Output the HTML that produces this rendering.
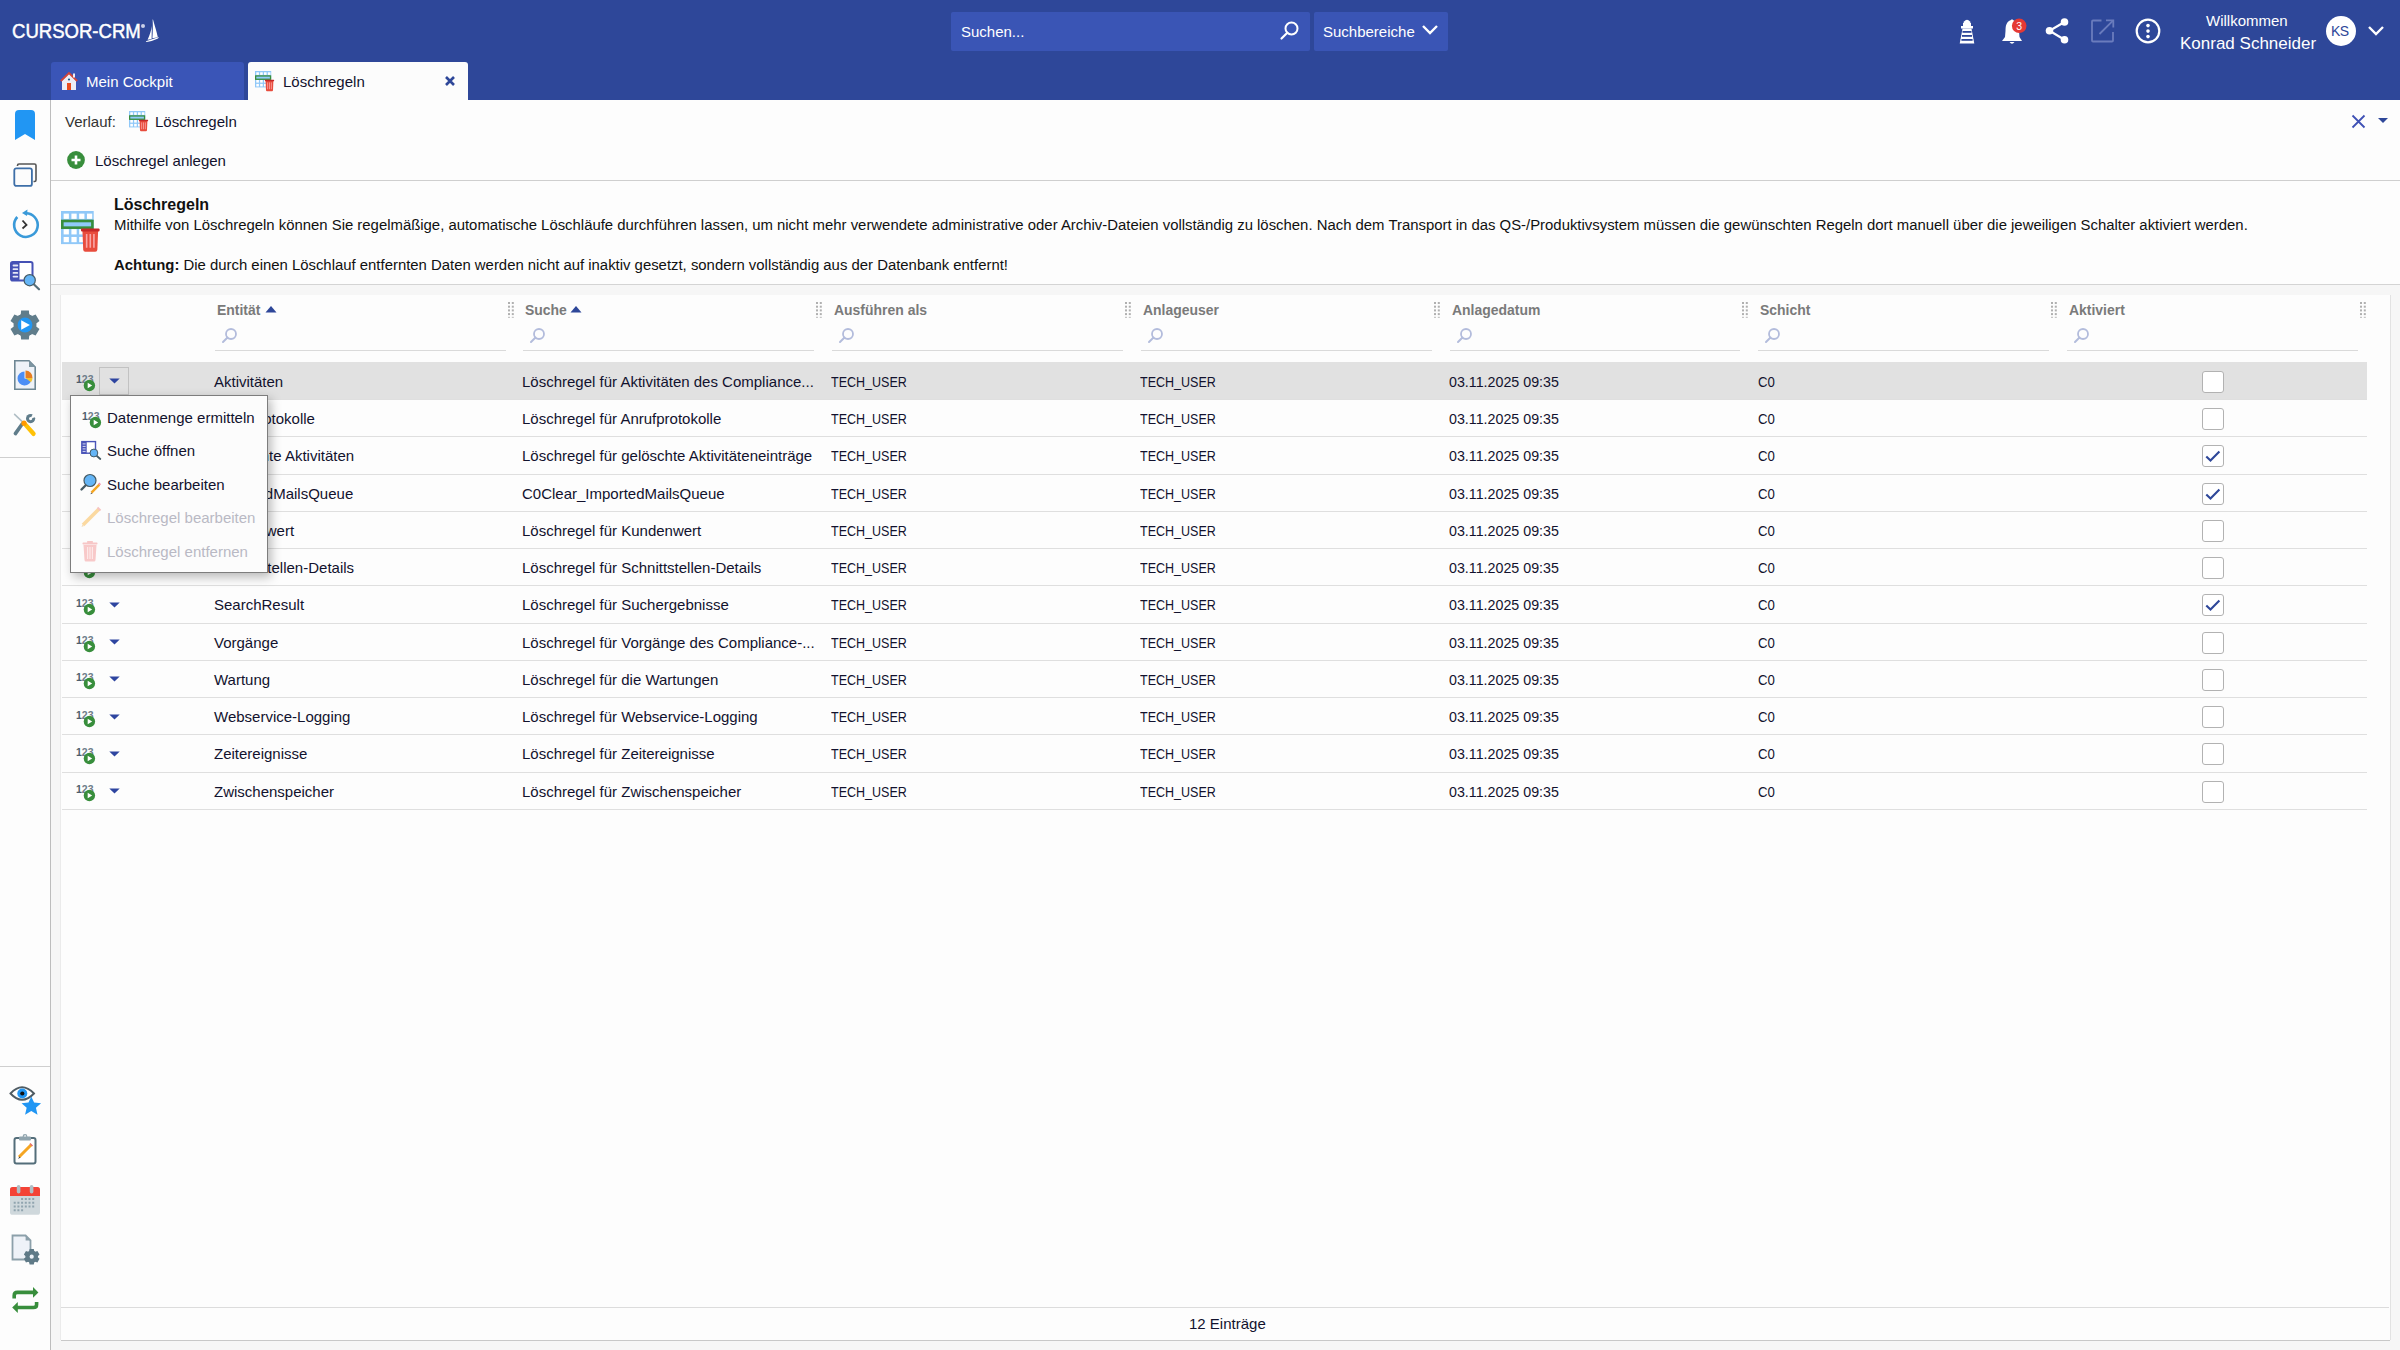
<!DOCTYPE html>
<html><head><meta charset="utf-8"><title>Löschregeln</title><style>
*{box-sizing:border-box;margin:0;padding:0}
html,body{width:2400px;height:1350px;overflow:hidden;background:#fdfdfd;font-family:"Liberation Sans",sans-serif;color:#12122e;font-size:15px}
.a{position:absolute}
.t{position:absolute;white-space:nowrap;line-height:1}
svg{position:absolute;overflow:visible}
</style></head><body>
<div class="a" style="left:0;top:0;width:2400px;height:100px;background:#2e4799"></div>
<div class="t" style="left:12px;top:21px;font-size:20.6px;color:#fff;transform:scaleX(0.9);transform-origin:0 0;-webkit-text-stroke:0.5px #fff">CURSOR-CRM</div>
<div class="a" style="left:141px;top:24px;width:4px;height:4px;border-radius:50%;background:#c9cfe8"></div>
<svg style="left:140px;top:15px" width="25" height="30" viewBox="0 0 25 30"><path d="M12.6 4.6 L13 4.6 C14.5 10 16.5 16 17.8 22.3 L12.4 23.3 C12.9 17 13 10 12.6 4.6 Z" fill="#fff"/><path d="M11.9 11 C11.2 15.5 9.8 20 7.6 24.8 L11.6 24 Z" fill="#fff"/><path d="M5.8 26.3 L19 22 L18 23.6 Q12 26.6 6.6 26.9 Z" fill="#fff"/></svg>
<div class="a" style="left:951px;top:12px;width:359px;height:39px;background:#3a55b5;border-radius:2px"></div>
<div class="t" style="left:961px;top:24px;color:#fff;font-size:15px">Suchen...</div>
<svg style="left:1280px;top:21px" width="20" height="20" viewBox="0 0 20 20"><circle cx="11.5" cy="7.5" r="6" fill="none" stroke="#fff" stroke-width="2"/><path d="M7.3 11.7 L1.5 17.5" stroke="#fff" stroke-width="2.2" stroke-linecap="round"/></svg>
<div class="a" style="left:1314px;top:12px;width:134px;height:39px;background:#3a55b5;border-radius:2px"></div>
<div class="t" style="left:1323px;top:24px;color:#fff;font-size:15px">Suchbereiche</div>
<svg style="left:1421px;top:24px" width="18" height="12" viewBox="0 0 18 12"><path d="M2 2 L9 9 L16 2" fill="none" stroke="#fff" stroke-width="2.4"/></svg>
<svg style="left:1958px;top:18px" width="18" height="27" viewBox="0 0 18 27"><path d="M6 3.5 Q9 0 12 3.5 L12.5 5 L5.5 5 Z" fill="#fff"/><rect x="5" y="5" width="8" height="3" fill="#fff"/><rect x="3" y="8" width="12" height="2.5" fill="#fff"/><path d="M4.5 10.5 L13.5 10.5 L16.3 25.5 L1.7 25.5 Z" fill="#fff"/><rect x="4.5" y="13" width="9" height="1.8" fill="#2e4799"/><rect x="4" y="17" width="10" height="1.8" fill="#2e4799"/><rect x="3.4" y="21" width="11.2" height="1.8" fill="#2e4799"/></svg>
<svg style="left:2000px;top:17px" width="28" height="28" viewBox="0 0 28 28"><path d="M11 3 C6 5 5.5 9 5.5 14 L5 20 L2 24 L22 24 L19.5 20 L19 14 C19 9 17 5 13 3 Q12 1.5 11 3 Z" fill="#fff"/><path d="M9.5 25 Q12 28.5 14.5 25 Z" fill="#fff"/><circle cx="19.2" cy="8.8" r="7.3" fill="#e53935"/><text x="19.2" y="12.6" font-size="10.5" text-anchor="middle" fill="#fff" font-family="Liberation Sans">3</text></svg>
<svg style="left:2044px;top:17px" width="26" height="28" viewBox="0 0 26 28"><path d="M20.5 5 L5.5 13.7 L20.5 22.7" fill="none" stroke="#fff" stroke-width="2.2"/><circle cx="20.5" cy="5" r="3.8" fill="#fff"/><circle cx="5.5" cy="13.7" r="3.8" fill="#fff"/><circle cx="20.5" cy="22.7" r="3.8" fill="#fff"/></svg>
<svg style="left:2091px;top:19px" width="24" height="24" viewBox="0 0 24 24"><path d="M10.5 1.5 L2 1.5 Q1 1.5 1 2.5 L1 21.5 Q1 22.5 2 22.5 L21 22.5 Q22 22.5 22 21.5 L22 13" fill="none" stroke="#6a7cbd" stroke-width="1.8"/><path d="M15 1.3 L22.3 1.3 L22.3 8.5" fill="none" stroke="#6a7cbd" stroke-width="1.8"/><path d="M22 1.6 L8.5 15" stroke="#6a7cbd" stroke-width="1.8"/></svg>
<svg style="left:2134px;top:17px" width="28" height="28" viewBox="0 0 28 28"><circle cx="14" cy="14" r="11.3" fill="none" stroke="#fff" stroke-width="2.2"/><circle cx="14" cy="8.6" r="1.8" fill="#fff"/><circle cx="14" cy="14.1" r="1.8" fill="#fff"/><circle cx="14" cy="19.6" r="1.8" fill="#fff"/></svg>
<div class="t" style="left:2206px;top:13px;color:#fff;font-size:15px">Willkommen</div>
<div class="t" style="left:2180px;top:35px;color:#fff;font-size:17px">Konrad Schneider</div>
<div class="a" style="left:2326px;top:16px;width:30px;height:30px;border-radius:50%;background:#fff"></div>
<div class="t" style="left:2331px;top:24px;color:#2e4799;font-size:14px;letter-spacing:-0.5px">KS</div>
<svg style="left:2367px;top:25px" width="18" height="12" viewBox="0 0 18 12"><path d="M2 2 L9 9 L16 2" fill="none" stroke="#fff" stroke-width="2.4"/></svg>
<div class="a" style="left:51px;top:62px;width:193px;height:38px;background:#3a55b7;border-radius:3px 3px 0 0"></div>
<svg style="left:60px;top:71px" width="18" height="20" viewBox="0 0 18 20"><path d="M2 9.5 L9 2.5 L16 9.5 L16 19 L2 19 Z" fill="#eceef6"/><path d="M0.8 10 L9 2 L17.2 10" fill="none" stroke="#d0453a" stroke-width="1.8"/><rect x="13" y="2.5" width="2" height="4" fill="#eceef6"/><rect x="7" y="12" width="4" height="7" fill="#e84c1e"/><circle cx="9" cy="8.5" r="1.1" fill="#1e5a8a"/></svg>
<div class="t" style="left:86px;top:74px;color:#fff;font-size:15px">Mein Cockpit</div>
<div class="a" style="left:248px;top:62px;width:220px;height:38px;background:#fcfcfc;border-radius:3px 3px 0 0"></div>
<svg style="left:255px;top:71px" width="20.0" height="21.0" viewBox="0 0 20 21"><rect x="0" y="0" width="16.2" height="16.4" fill="#90c8f8"/><rect x="1.30" y="1.30" width="2.6" height="2.6" fill="#fff"/><rect x="1.30" y="9.00" width="2.6" height="2.6" fill="#fff"/><rect x="1.30" y="12.85" width="2.6" height="2.6" fill="#fff"/><rect x="5.15" y="1.30" width="2.6" height="2.6" fill="#fff"/><rect x="5.15" y="9.00" width="2.6" height="2.6" fill="#fff"/><rect x="5.15" y="12.85" width="2.6" height="2.6" fill="#fff"/><rect x="9.00" y="1.30" width="2.6" height="2.6" fill="#fff"/><rect x="9.00" y="9.00" width="2.6" height="2.6" fill="#fff"/><rect x="9.00" y="12.85" width="2.6" height="2.6" fill="#fff"/><rect x="12.85" y="1.30" width="2.6" height="2.6" fill="#fff"/><rect x="12.85" y="9.00" width="2.6" height="2.6" fill="#fff"/><rect x="12.85" y="12.85" width="2.6" height="2.6" fill="#fff"/><rect x="0" y="4.3" width="16.2" height="4.6" fill="#388e3c"/><rect x="1.3" y="5.6" width="13.6" height="2" fill="#90caf9"/><g transform="translate(0,-0.6)"><path d="M10.6 10 L18.4 10 L18 19.8 Q17.9 20.8 17 20.8 L12 20.8 Q11.1 20.8 11 19.8 Z" fill="#e84c3d"/><rect x="9.9" y="9.3" width="9.2" height="1.5" rx="0.5" fill="#c62828"/><rect x="12.3" y="12" width="0.8" height="6.8" fill="#f9a6a6"/><rect x="14.1" y="12" width="0.8" height="6.8" fill="#f9a6a6"/><rect x="15.9" y="12" width="0.8" height="6.8" fill="#f9a6a6"/></g></svg>
<div class="t" style="left:283px;top:74px;color:#12122e;font-size:15px">Löschregeln</div>
<svg style="left:444px;top:75px" width="12" height="12" viewBox="0 0 12 12"><path d="M2 2 L10 10 M10 2 L2 10" stroke="#2e4799" stroke-width="2.6"/></svg>
<div class="a" style="left:50px;top:100px;width:1px;height:1250px;background:#bdbdbd"></div>
<div class="a" style="left:0;top:457px;width:50px;height:1px;background:#cfcfcf"></div>
<div class="a" style="left:0;top:1066px;width:50px;height:1px;background:#cfcfcf"></div>
<svg style="left:15px;top:110px" width="20" height="30" viewBox="0 0 20 30"><path d="M0 4 Q0 0 4 0 L16 0 Q20 0 20 4 L20 30 L10 24 L0 30 Z" fill="#2196f3"/></svg>
<svg style="left:13px;top:163px" width="25" height="25" viewBox="0 0 25 25"><path d="M4.5 3 L4.5 2.5 Q4.5 1 6 1 L21.5 1 Q23 1 23 2.5 L23 17 Q23 18.5 21.5 18.5 L20.5 18.5" fill="none" stroke="#555" stroke-width="1.6"/><rect x="1.3" y="5.3" width="17.6" height="17.6" rx="2" fill="#fcfcfc" stroke="#3e6fa8" stroke-width="1.8"/></svg>
<svg style="left:11px;top:210px" width="28" height="30" viewBox="0 0 28 30"><path d="M6.3 7 A11.8 11.8 0 1 0 14 3.3" fill="none" stroke="#3a9ad9" stroke-width="2.6"/><path d="M11 3 L16.5 -0.5 L16 6 Z" fill="#3a9ad9"/><path d="M11.5 10.5 L15.5 15 L11.5 18.5" fill="none" stroke="#333" stroke-width="1.8"/></svg>
<svg style="left:10px;top:261px" width="31" height="30" viewBox="0 0 31 30"><rect x="1" y="1" width="21.5" height="18.5" rx="1.8" fill="#fff" stroke="#4551b5" stroke-width="2"/><rect x="1" y="1" width="8.5" height="18.5" rx="1.5" fill="#4551b5"/><rect x="2.6" y="3.6" width="5.6" height="1.8" rx="0.9" fill="#e6e8f6"/><rect x="2.6" y="7.3" width="5.6" height="1.8" rx="0.9" fill="#e6e8f6"/><rect x="2.6" y="11" width="5.6" height="1.8" rx="0.9" fill="#e6e8f6"/><rect x="2.6" y="14.7" width="5.6" height="1.8" rx="0.9" fill="#e6e8f6"/><path d="M24 23.5 L29 28.3" stroke="#546e7a" stroke-width="2.2" stroke-linecap="round"/><circle cx="19.7" cy="19.2" r="5.6" fill="#64b5f6" stroke="#455a64" stroke-width="1.2"/></svg>
<svg style="left:10px;top:310px" width="30" height="30" viewBox="0 0 30 30"><path d="M10.77 4.52 L11.12 0.51 L18.88 0.51 L19.23 4.52 L21.96 6.10 L25.61 4.39 L29.49 11.12 L26.19 13.43 L26.19 16.57 L29.49 18.88 L25.61 25.61 L21.96 23.90 L19.23 25.48 L18.88 29.49 L11.12 29.49 L10.77 25.48 L8.04 23.90 L4.39 25.61 L0.51 18.88 L3.81 16.57 L3.81 13.43 L0.51 11.12 L4.39 4.39 L8.04 6.10 Z" fill="#607d8b"/><circle cx="15" cy="15" r="11.3" fill="#607d8b"/><circle cx="15" cy="15" r="7.4" fill="#2196f3"/><path d="M11.2 10.2 L19.9 15 L11.2 19.8 Z" fill="#fff"/></svg>
<svg style="left:14px;top:360px" width="22" height="30" viewBox="0 0 22 30"><path d="M0.8 0.8 L15 0.8 L21.2 7 L21.2 29.2 L0.8 29.2 Z" fill="#eef2f8" stroke="#6e8794" stroke-width="1.6"/><path d="M15 0.8 L15 7 L21.2 7 Z" fill="#7e96a2"/><g transform="translate(-1,-0.5)"><path d="M11.5 12 A7 7 0 1 0 18.5 19.5 L11.5 19 Z" fill="#4c8ef5"/><path d="M12.5 11 L12.5 18.5 L19.5 18.5 A7 7 0 0 0 12.5 11 Z" fill="#e67e22"/><path d="M12.5 18.5 L19.5 18.5 A7 7 0 0 1 18 22.8 Z" fill="#f4c430"/></g></svg>
<svg style="left:12px;top:412px" width="26" height="26" viewBox="0 0 26 26"><path d="M2.6 2.4 L10.5 9.8" stroke="#b0bec5" stroke-width="1.6" stroke-linecap="round"/><path d="M10 12.2 L3.4 21.6" stroke="#607d8b" stroke-width="3.6" stroke-linecap="round"/><circle cx="18.6" cy="6.6" r="4.6" fill="#607d8b"/><path d="M18.6 6.6 L21.5 0.5 L26 4.5 Z" fill="#fdfdfd"/><circle cx="18.6" cy="6.6" r="1.6" fill="#fdfdfd"/><path d="M13.2 12.4 L21.5 21.8" stroke="#ffc107" stroke-width="4.4" stroke-linecap="round"/><circle cx="12" cy="11.2" r="2.6" fill="#ff9800"/></svg>
<svg style="left:9px;top:1084px" width="33" height="32" viewBox="0 0 33 32"><path d="M1.5 9.5 Q13 -3 25 9.5 Q13 22 1.5 9.5 Z" fill="#fff" stroke="#4f5b62" stroke-width="1.9"/><circle cx="13.3" cy="9.5" r="5" fill="#2196f3"/><circle cx="13.3" cy="9.5" r="2.1" fill="#111"/><path transform="translate(22.3,21.6) scale(1.22) translate(-21.5,-21.5)" d="M21.5 14 L23.8 19 L29.5 19.5 L25.3 23.2 L26.6 29 L21.5 26 L16.4 29 L17.7 23.2 L13.5 19.5 L19.2 19 Z" fill="#2196f3"/></svg>
<svg style="left:13px;top:1134px" width="25" height="31" viewBox="0 0 25 31"><rect x="1.5" y="4" width="21" height="25.5" rx="2" fill="#fff" stroke="#546e7a" stroke-width="2"/><rect x="6" y="2.5" width="12" height="4" rx="1" fill="#90a4ae"/><circle cx="12" cy="2.5" r="1.8" fill="none" stroke="#90a4ae" stroke-width="1.2"/><path d="M18.5 10.5 L6 23" stroke="#f5a623" stroke-width="3"/><path d="M6.5 22.5 L5 25 L7.5 23.5 Z" fill="#444"/><path d="M17 9.5 L19.5 12" stroke="#e57373" stroke-width="1.5"/></svg>
<svg style="left:10px;top:1185px" width="30" height="31" viewBox="0 0 30 31"><rect x="0" y="2" width="30" height="27.8" rx="2.6" fill="#cfd8dc"/><path d="M0 4.6 Q0 2 2.6 2 L27.4 2 Q30 2 30 4.6 L30 11 L0 11 Z" fill="#f44336"/><rect x="6.8" y="0" width="3.6" height="8.5" rx="1.8" fill="#b0bec5"/><rect x="19.8" y="0" width="3.6" height="8.5" rx="1.8" fill="#b0bec5"/><rect x="11.10" y="13.00" width="2" height="2" fill="#90a4ae"/><rect x="14.80" y="13.00" width="2" height="2" fill="#90a4ae"/><rect x="18.50" y="13.00" width="2" height="2" fill="#90a4ae"/><rect x="22.20" y="13.00" width="2" height="2" fill="#90a4ae"/><rect x="3.70" y="16.75" width="2" height="2" fill="#90a4ae"/><rect x="7.40" y="16.75" width="2" height="2" fill="#90a4ae"/><rect x="11.10" y="16.75" width="2" height="2" fill="#90a4ae"/><rect x="14.80" y="16.75" width="2" height="2" fill="#90a4ae"/><rect x="18.50" y="16.75" width="2" height="2" fill="#90a4ae"/><rect x="22.20" y="16.75" width="2" height="2" fill="#90a4ae"/><rect x="3.70" y="20.50" width="2" height="2" fill="#90a4ae"/><rect x="7.40" y="20.50" width="2" height="2" fill="#90a4ae"/><rect x="11.10" y="20.50" width="2" height="2" fill="#90a4ae"/><rect x="14.80" y="20.50" width="2" height="2" fill="#90a4ae"/><rect x="18.50" y="20.50" width="2" height="2" fill="#90a4ae"/><rect x="22.20" y="20.50" width="2" height="2" fill="#90a4ae"/><rect x="3.70" y="24.25" width="2" height="2" fill="#90a4ae"/><rect x="7.40" y="24.25" width="2" height="2" fill="#90a4ae"/><rect x="11.10" y="24.25" width="2" height="2" fill="#90a4ae"/></svg>
<svg style="left:11px;top:1234px" width="31" height="32" viewBox="0 0 31 32"><path d="M1.5 1.5 L14.6 1.5 L19.5 6.4 L19.5 25.5 L1.5 25.5 Z" fill="#eef2f8" stroke="#8ca0aa" stroke-width="1.8"/><path d="M14.6 1.5 L14.6 6.4 L19.5 6.4 Z" fill="#8ca0aa"/><path d="M18.12 17.17 L18.60 14.88 L22.80 14.88 L23.28 17.17 L24.20 17.70 L26.43 16.97 L28.52 20.60 L26.78 22.17 L26.78 23.23 L28.52 24.80 L26.43 28.43 L24.20 27.70 L23.28 28.23 L22.80 30.52 L18.60 30.52 L18.12 28.23 L17.20 27.70 L14.97 28.43 L12.88 24.80 L14.62 23.23 L14.62 22.17 L12.88 20.60 L14.97 16.97 L17.20 17.70 Z" fill="#5f7a87"/><circle cx="20.7" cy="22.7" r="6.1" fill="#5f7a87"/><circle cx="20.7" cy="22.7" r="2.1" fill="#eef2f8"/></svg>
<svg style="left:11px;top:1286px" width="29" height="28" viewBox="0 0 29 28"><path d="M3.2 12.5 L3.2 9.6 Q3.2 6.4 6.4 6.4 L23 6.4" fill="none" stroke="#388e3c" stroke-width="3.6"/><path d="M22 1 L27.4 6.4 L22 11.8 Z" fill="#388e3c"/><path d="M25.6 16 L25.6 18.4 Q25.6 21.5 22.4 21.5 L6 21.5" fill="none" stroke="#388e3c" stroke-width="3.6"/><path d="M6.8 16 L1.2 21.5 L6.8 27 Z" fill="#388e3c"/></svg>
<div class="t" style="left:65px;top:114px;font-size:15px;color:#333">Verlauf:</div>
<svg style="left:129px;top:111px" width="20.0" height="21.0" viewBox="0 0 20 21"><rect x="0" y="0" width="16.2" height="16.4" fill="#90c8f8"/><rect x="1.30" y="1.30" width="2.6" height="2.6" fill="#fff"/><rect x="1.30" y="9.00" width="2.6" height="2.6" fill="#fff"/><rect x="1.30" y="12.85" width="2.6" height="2.6" fill="#fff"/><rect x="5.15" y="1.30" width="2.6" height="2.6" fill="#fff"/><rect x="5.15" y="9.00" width="2.6" height="2.6" fill="#fff"/><rect x="5.15" y="12.85" width="2.6" height="2.6" fill="#fff"/><rect x="9.00" y="1.30" width="2.6" height="2.6" fill="#fff"/><rect x="9.00" y="9.00" width="2.6" height="2.6" fill="#fff"/><rect x="9.00" y="12.85" width="2.6" height="2.6" fill="#fff"/><rect x="12.85" y="1.30" width="2.6" height="2.6" fill="#fff"/><rect x="12.85" y="9.00" width="2.6" height="2.6" fill="#fff"/><rect x="12.85" y="12.85" width="2.6" height="2.6" fill="#fff"/><rect x="0" y="4.3" width="16.2" height="4.6" fill="#388e3c"/><rect x="1.3" y="5.6" width="13.6" height="2" fill="#90caf9"/><g transform="translate(0,-0.6)"><path d="M10.6 10 L18.4 10 L18 19.8 Q17.9 20.8 17 20.8 L12 20.8 Q11.1 20.8 11 19.8 Z" fill="#e84c3d"/><rect x="9.9" y="9.3" width="9.2" height="1.5" rx="0.5" fill="#c62828"/><rect x="12.3" y="12" width="0.8" height="6.8" fill="#f9a6a6"/><rect x="14.1" y="12" width="0.8" height="6.8" fill="#f9a6a6"/><rect x="15.9" y="12" width="0.8" height="6.8" fill="#f9a6a6"/></g></svg>
<div class="t" style="left:155px;top:114px;font-size:15px">Löschregeln</div>
<svg style="left:2351px;top:114px" width="15" height="15" viewBox="0 0 15 15"><path d="M1.5 1.5 L13.5 13.5 M13.5 1.5 L1.5 13.5" stroke="#3f51b5" stroke-width="1.8"/></svg>
<svg style="left:2377px;top:116.5px" width="12" height="8" viewBox="0 0 12 8"><path d="M1 1 L11 1 L6 6 Z" fill="#2e4799"/></svg>
<svg style="left:67px;top:151px" width="18" height="18" viewBox="0 0 18 18"><circle cx="9" cy="9" r="8.9" fill="#388e3c"/><path d="M9 4.5 L9 13.5 M4.5 9 L13.5 9" stroke="#fff" stroke-width="2.6"/></svg>
<div class="t" style="left:95px;top:153px;font-size:15px">Löschregel anlegen</div>
<div class="a" style="left:51px;top:180px;width:2349px;height:1px;background:#cfcfcf"></div>
<svg style="left:61px;top:211px" width="40.4" height="42.42" viewBox="0 0 20 21"><rect x="0" y="0" width="16.2" height="16.4" fill="#90c8f8"/><rect x="1.30" y="1.30" width="2.6" height="2.6" fill="#fff"/><rect x="1.30" y="9.00" width="2.6" height="2.6" fill="#fff"/><rect x="1.30" y="12.85" width="2.6" height="2.6" fill="#fff"/><rect x="5.15" y="1.30" width="2.6" height="2.6" fill="#fff"/><rect x="5.15" y="9.00" width="2.6" height="2.6" fill="#fff"/><rect x="5.15" y="12.85" width="2.6" height="2.6" fill="#fff"/><rect x="9.00" y="1.30" width="2.6" height="2.6" fill="#fff"/><rect x="9.00" y="9.00" width="2.6" height="2.6" fill="#fff"/><rect x="9.00" y="12.85" width="2.6" height="2.6" fill="#fff"/><rect x="12.85" y="1.30" width="2.6" height="2.6" fill="#fff"/><rect x="12.85" y="9.00" width="2.6" height="2.6" fill="#fff"/><rect x="12.85" y="12.85" width="2.6" height="2.6" fill="#fff"/><rect x="0" y="4.3" width="16.2" height="4.6" fill="#388e3c"/><rect x="1.3" y="5.6" width="13.6" height="2" fill="#90caf9"/><g transform="translate(0,-0.6)"><path d="M10.6 10 L18.4 10 L18 19.8 Q17.9 20.8 17 20.8 L12 20.8 Q11.1 20.8 11 19.8 Z" fill="#e84c3d"/><rect x="9.9" y="9.3" width="9.2" height="1.5" rx="0.5" fill="#c62828"/><rect x="12.3" y="12" width="0.8" height="6.8" fill="#f9a6a6"/><rect x="14.1" y="12" width="0.8" height="6.8" fill="#f9a6a6"/><rect x="15.9" y="12" width="0.8" height="6.8" fill="#f9a6a6"/></g></svg>
<div class="t" style="left:114px;top:197px;font-size:16px;font-weight:700;color:#111">Löschregeln</div>
<div class="t" style="left:114px;top:218px;font-size:14.9px;color:#111">Mithilfe von Löschregeln können Sie regelmäßige, automatische Löschläufe durchführen lassen, um nicht mehr verwendete administrative oder Archiv-Dateien vollständig zu löschen. Nach dem Transport in das QS-/Produktivsystem müssen die gewünschten Regeln dort manuell über die jeweiligen Schalter aktiviert werden.</div>
<div class="t" style="left:114px;top:258px;font-size:14.9px;color:#111"><b>Achtung:</b> Die durch einen Löschlauf entfernten Daten werden nicht auf inaktiv gesetzt, sondern vollständig aus der Datenbank entfernt!</div>
<div class="a" style="left:51px;top:284px;width:2349px;height:1px;background:#d4d4d4"></div>
<div class="a" style="left:51px;top:285px;width:2349px;height:1065px;background:#f6f6f6"></div>
<div class="a" style="left:61px;top:295px;width:2329px;height:1045px;background:#fdfdfd;box-shadow:0 1px 0 #c8c8c8, 1px 0 0 #e2e2e2, -1px 0 0 #ebebeb"></div>
<div class="t" style="left:217px;top:302px;font-size:15px;font-weight:700;color:#7a7a7a;transform:scaleX(0.93);transform-origin:0 0">Entität</div>
<div class="a" style="left:215px;top:350px;width:291px;height:1px;background:#dadada"></div>
<svg style="left:221px;top:327px" width="17" height="17" viewBox="0 0 17 17"><circle cx="10" cy="7" r="5" fill="none" stroke="#b3bcdc" stroke-width="1.8"/><path d="M6.5 10.5 L2 15" stroke="#b3bcdc" stroke-width="2" stroke-linecap="round"/></svg>
<div class="t" style="left:525px;top:302px;font-size:15px;font-weight:700;color:#7a7a7a;transform:scaleX(0.93);transform-origin:0 0">Suche</div>
<div class="a" style="left:523px;top:350px;width:291px;height:1px;background:#dadada"></div>
<svg style="left:529px;top:327px" width="17" height="17" viewBox="0 0 17 17"><circle cx="10" cy="7" r="5" fill="none" stroke="#b3bcdc" stroke-width="1.8"/><path d="M6.5 10.5 L2 15" stroke="#b3bcdc" stroke-width="2" stroke-linecap="round"/></svg>
<div class="t" style="left:834px;top:302px;font-size:15px;font-weight:700;color:#7a7a7a;transform:scaleX(0.93);transform-origin:0 0">Ausführen als</div>
<div class="a" style="left:832px;top:350px;width:291px;height:1px;background:#dadada"></div>
<svg style="left:838px;top:327px" width="17" height="17" viewBox="0 0 17 17"><circle cx="10" cy="7" r="5" fill="none" stroke="#b3bcdc" stroke-width="1.8"/><path d="M6.5 10.5 L2 15" stroke="#b3bcdc" stroke-width="2" stroke-linecap="round"/></svg>
<div class="t" style="left:1143px;top:302px;font-size:15px;font-weight:700;color:#7a7a7a;transform:scaleX(0.93);transform-origin:0 0">Anlageuser</div>
<div class="a" style="left:1141px;top:350px;width:291px;height:1px;background:#dadada"></div>
<svg style="left:1147px;top:327px" width="17" height="17" viewBox="0 0 17 17"><circle cx="10" cy="7" r="5" fill="none" stroke="#b3bcdc" stroke-width="1.8"/><path d="M6.5 10.5 L2 15" stroke="#b3bcdc" stroke-width="2" stroke-linecap="round"/></svg>
<div class="t" style="left:1452px;top:302px;font-size:15px;font-weight:700;color:#7a7a7a;transform:scaleX(0.93);transform-origin:0 0">Anlagedatum</div>
<div class="a" style="left:1450px;top:350px;width:290px;height:1px;background:#dadada"></div>
<svg style="left:1456px;top:327px" width="17" height="17" viewBox="0 0 17 17"><circle cx="10" cy="7" r="5" fill="none" stroke="#b3bcdc" stroke-width="1.8"/><path d="M6.5 10.5 L2 15" stroke="#b3bcdc" stroke-width="2" stroke-linecap="round"/></svg>
<div class="t" style="left:1760px;top:302px;font-size:15px;font-weight:700;color:#7a7a7a;transform:scaleX(0.93);transform-origin:0 0">Schicht</div>
<div class="a" style="left:1758px;top:350px;width:291px;height:1px;background:#dadada"></div>
<svg style="left:1764px;top:327px" width="17" height="17" viewBox="0 0 17 17"><circle cx="10" cy="7" r="5" fill="none" stroke="#b3bcdc" stroke-width="1.8"/><path d="M6.5 10.5 L2 15" stroke="#b3bcdc" stroke-width="2" stroke-linecap="round"/></svg>
<div class="t" style="left:2069px;top:302px;font-size:15px;font-weight:700;color:#7a7a7a;transform:scaleX(0.93);transform-origin:0 0">Aktiviert</div>
<div class="a" style="left:2067px;top:350px;width:291px;height:1px;background:#dadada"></div>
<svg style="left:2073px;top:327px" width="17" height="17" viewBox="0 0 17 17"><circle cx="10" cy="7" r="5" fill="none" stroke="#b3bcdc" stroke-width="1.8"/><path d="M6.5 10.5 L2 15" stroke="#b3bcdc" stroke-width="2" stroke-linecap="round"/></svg>
<svg style="left:508px;top:302px" width="6" height="17" viewBox="0 0 6 17"><rect x="0" y="0" width="2" height="2" fill="#b0b0b0"/><rect x="0" y="3.7" width="2" height="2" fill="#b0b0b0"/><rect x="0" y="7.4" width="2" height="2" fill="#b0b0b0"/><rect x="0" y="11.1" width="2" height="2" fill="#b0b0b0"/><rect x="3.8" y="0" width="2" height="2" fill="#b0b0b0"/><rect x="3.8" y="3.7" width="2" height="2" fill="#b0b0b0"/><rect x="3.8" y="7.4" width="2" height="2" fill="#b0b0b0"/><rect x="3.8" y="11.1" width="2" height="2" fill="#b0b0b0"/><rect x="0" y="14.8" width="2" height="1" fill="#b8b8b8"/><rect x="3.8" y="14.8" width="2" height="1" fill="#b8b8b8"/></svg>
<svg style="left:816px;top:302px" width="6" height="17" viewBox="0 0 6 17"><rect x="0" y="0" width="2" height="2" fill="#b0b0b0"/><rect x="0" y="3.7" width="2" height="2" fill="#b0b0b0"/><rect x="0" y="7.4" width="2" height="2" fill="#b0b0b0"/><rect x="0" y="11.1" width="2" height="2" fill="#b0b0b0"/><rect x="3.8" y="0" width="2" height="2" fill="#b0b0b0"/><rect x="3.8" y="3.7" width="2" height="2" fill="#b0b0b0"/><rect x="3.8" y="7.4" width="2" height="2" fill="#b0b0b0"/><rect x="3.8" y="11.1" width="2" height="2" fill="#b0b0b0"/><rect x="0" y="14.8" width="2" height="1" fill="#b8b8b8"/><rect x="3.8" y="14.8" width="2" height="1" fill="#b8b8b8"/></svg>
<svg style="left:1125px;top:302px" width="6" height="17" viewBox="0 0 6 17"><rect x="0" y="0" width="2" height="2" fill="#b0b0b0"/><rect x="0" y="3.7" width="2" height="2" fill="#b0b0b0"/><rect x="0" y="7.4" width="2" height="2" fill="#b0b0b0"/><rect x="0" y="11.1" width="2" height="2" fill="#b0b0b0"/><rect x="3.8" y="0" width="2" height="2" fill="#b0b0b0"/><rect x="3.8" y="3.7" width="2" height="2" fill="#b0b0b0"/><rect x="3.8" y="7.4" width="2" height="2" fill="#b0b0b0"/><rect x="3.8" y="11.1" width="2" height="2" fill="#b0b0b0"/><rect x="0" y="14.8" width="2" height="1" fill="#b8b8b8"/><rect x="3.8" y="14.8" width="2" height="1" fill="#b8b8b8"/></svg>
<svg style="left:1434px;top:302px" width="6" height="17" viewBox="0 0 6 17"><rect x="0" y="0" width="2" height="2" fill="#b0b0b0"/><rect x="0" y="3.7" width="2" height="2" fill="#b0b0b0"/><rect x="0" y="7.4" width="2" height="2" fill="#b0b0b0"/><rect x="0" y="11.1" width="2" height="2" fill="#b0b0b0"/><rect x="3.8" y="0" width="2" height="2" fill="#b0b0b0"/><rect x="3.8" y="3.7" width="2" height="2" fill="#b0b0b0"/><rect x="3.8" y="7.4" width="2" height="2" fill="#b0b0b0"/><rect x="3.8" y="11.1" width="2" height="2" fill="#b0b0b0"/><rect x="0" y="14.8" width="2" height="1" fill="#b8b8b8"/><rect x="3.8" y="14.8" width="2" height="1" fill="#b8b8b8"/></svg>
<svg style="left:1742px;top:302px" width="6" height="17" viewBox="0 0 6 17"><rect x="0" y="0" width="2" height="2" fill="#b0b0b0"/><rect x="0" y="3.7" width="2" height="2" fill="#b0b0b0"/><rect x="0" y="7.4" width="2" height="2" fill="#b0b0b0"/><rect x="0" y="11.1" width="2" height="2" fill="#b0b0b0"/><rect x="3.8" y="0" width="2" height="2" fill="#b0b0b0"/><rect x="3.8" y="3.7" width="2" height="2" fill="#b0b0b0"/><rect x="3.8" y="7.4" width="2" height="2" fill="#b0b0b0"/><rect x="3.8" y="11.1" width="2" height="2" fill="#b0b0b0"/><rect x="0" y="14.8" width="2" height="1" fill="#b8b8b8"/><rect x="3.8" y="14.8" width="2" height="1" fill="#b8b8b8"/></svg>
<svg style="left:2051px;top:302px" width="6" height="17" viewBox="0 0 6 17"><rect x="0" y="0" width="2" height="2" fill="#b0b0b0"/><rect x="0" y="3.7" width="2" height="2" fill="#b0b0b0"/><rect x="0" y="7.4" width="2" height="2" fill="#b0b0b0"/><rect x="0" y="11.1" width="2" height="2" fill="#b0b0b0"/><rect x="3.8" y="0" width="2" height="2" fill="#b0b0b0"/><rect x="3.8" y="3.7" width="2" height="2" fill="#b0b0b0"/><rect x="3.8" y="7.4" width="2" height="2" fill="#b0b0b0"/><rect x="3.8" y="11.1" width="2" height="2" fill="#b0b0b0"/><rect x="0" y="14.8" width="2" height="1" fill="#b8b8b8"/><rect x="3.8" y="14.8" width="2" height="1" fill="#b8b8b8"/></svg>
<svg style="left:2360px;top:302px" width="6" height="17" viewBox="0 0 6 17"><rect x="0" y="0" width="2" height="2" fill="#b0b0b0"/><rect x="0" y="3.7" width="2" height="2" fill="#b0b0b0"/><rect x="0" y="7.4" width="2" height="2" fill="#b0b0b0"/><rect x="0" y="11.1" width="2" height="2" fill="#b0b0b0"/><rect x="3.8" y="0" width="2" height="2" fill="#b0b0b0"/><rect x="3.8" y="3.7" width="2" height="2" fill="#b0b0b0"/><rect x="3.8" y="7.4" width="2" height="2" fill="#b0b0b0"/><rect x="3.8" y="11.1" width="2" height="2" fill="#b0b0b0"/><rect x="0" y="14.8" width="2" height="1" fill="#b8b8b8"/><rect x="3.8" y="14.8" width="2" height="1" fill="#b8b8b8"/></svg>
<svg style="left:265px;top:305px" width="12" height="8" viewBox="0 0 12 8"><path d="M0.5 7.5 L11.5 7.5 L6 1 Z" fill="#2e4799"/></svg>
<svg style="left:570px;top:305px" width="12" height="8" viewBox="0 0 12 8"><path d="M0.5 7.5 L11.5 7.5 L6 1 Z" fill="#2e4799"/></svg>
<div class="a" style="left:62px;top:362px;width:2305px;height:38px;background:#e1e1e1;border-bottom:1px solid #dfdfdf"></div>
<svg style="left:76px;top:373px" width="22" height="18" viewBox="0 0 22 18"><text x="0" y="9.9" font-size="10.5" font-weight="700" font-family="Liberation Sans" fill="#4f5d6b">1<tspan fill="#6f7d8a">23</tspan></text><circle cx="13.4" cy="12.5" r="5.7" fill="#388e3c"/><path d="M11.7 9.7 L16.2 12.5 L11.7 15.3 Z" fill="#fff"/></svg>
<div class="a" style="left:99px;top:367px;width:30px;height:28px;border:1px solid #c2c2c2;background:#e1e1e1"></div>
<svg style="left:108.5px;top:377.50px" width="11" height="7" viewBox="0 0 11 7"><path d="M0.3 0.5 L10.7 0.5 L5.5 5.6 Z" fill="#2e45a0"/></svg>
<div class="t" style="left:214px;top:374px;font-size:15px">Aktivitäten</div>
<div class="t" style="left:522px;top:374px;font-size:15px">Löschregel für Aktivitäten des Compliance...</div>
<div class="t" style="left:831px;top:374px;font-size:15px;transform:scaleX(0.835);transform-origin:0 0">TECH_USER</div>
<div class="t" style="left:1140px;top:374px;font-size:15px;transform:scaleX(0.835);transform-origin:0 0">TECH_USER</div>
<div class="t" style="left:1449px;top:374px;font-size:15px;transform:scaleX(0.95);transform-origin:0 0">03.11.2025 09:35</div>
<div class="t" style="left:1758px;top:374px;font-size:15px;transform:scaleX(0.88);transform-origin:0 0">C0</div>
<div class="a" style="left:2202px;top:371px;width:22px;height:22px;border:1px solid #b2b2b2;border-radius:3px;background:#fff"></div>
<div class="a" style="left:62px;top:400px;width:2305px;height:37px;background:transparent;border-bottom:1px solid #dfdfdf"></div>
<svg style="left:76px;top:411px" width="22" height="18" viewBox="0 0 22 18"><text x="0" y="9.9" font-size="10.5" font-weight="700" font-family="Liberation Sans" fill="#4f5d6b">1<tspan fill="#6f7d8a">23</tspan></text><circle cx="13.4" cy="12.5" r="5.7" fill="#388e3c"/><path d="M11.7 9.7 L16.2 12.5 L11.7 15.3 Z" fill="#fff"/></svg>
<svg style="left:108.5px;top:415.50px" width="11" height="7" viewBox="0 0 11 7"><path d="M0.3 0.5 L10.7 0.5 L5.5 5.6 Z" fill="#2e45a0"/></svg>
<div class="t" style="left:214px;top:411px;font-size:15px">Anrufprotokolle</div>
<div class="t" style="left:522px;top:411px;font-size:15px">Löschregel für Anrufprotokolle</div>
<div class="t" style="left:831px;top:411px;font-size:15px;transform:scaleX(0.835);transform-origin:0 0">TECH_USER</div>
<div class="t" style="left:1140px;top:411px;font-size:15px;transform:scaleX(0.835);transform-origin:0 0">TECH_USER</div>
<div class="t" style="left:1449px;top:411px;font-size:15px;transform:scaleX(0.95);transform-origin:0 0">03.11.2025 09:35</div>
<div class="t" style="left:1758px;top:411px;font-size:15px;transform:scaleX(0.88);transform-origin:0 0">C0</div>
<div class="a" style="left:2202px;top:408px;width:22px;height:22px;border:1px solid #b2b2b2;border-radius:3px;background:#fff"></div>
<div class="a" style="left:62px;top:437px;width:2305px;height:38px;background:transparent;border-bottom:1px solid #dfdfdf"></div>
<svg style="left:76px;top:448px" width="22" height="18" viewBox="0 0 22 18"><text x="0" y="9.9" font-size="10.5" font-weight="700" font-family="Liberation Sans" fill="#4f5d6b">1<tspan fill="#6f7d8a">23</tspan></text><circle cx="13.4" cy="12.5" r="5.7" fill="#388e3c"/><path d="M11.7 9.7 L16.2 12.5 L11.7 15.3 Z" fill="#fff"/></svg>
<svg style="left:108.5px;top:452.50px" width="11" height="7" viewBox="0 0 11 7"><path d="M0.3 0.5 L10.7 0.5 L5.5 5.6 Z" fill="#2e45a0"/></svg>
<div class="t" style="left:214px;top:448px;font-size:15px">Gelöschte Aktivitäten</div>
<div class="t" style="left:522px;top:448px;font-size:15px">Löschregel für gelöschte Aktivitäteneinträge</div>
<div class="t" style="left:831px;top:448px;font-size:15px;transform:scaleX(0.835);transform-origin:0 0">TECH_USER</div>
<div class="t" style="left:1140px;top:448px;font-size:15px;transform:scaleX(0.835);transform-origin:0 0">TECH_USER</div>
<div class="t" style="left:1449px;top:448px;font-size:15px;transform:scaleX(0.95);transform-origin:0 0">03.11.2025 09:35</div>
<div class="t" style="left:1758px;top:448px;font-size:15px;transform:scaleX(0.88);transform-origin:0 0">C0</div>
<div class="a" style="left:2202px;top:445px;width:22px;height:22px;border:1px solid #b2b2b2;border-radius:3px;background:#fff"></div>
<svg style="left:2202px;top:445px" width="22" height="22" viewBox="0 0 22 22"><path d="M4.3 11.4 L8.5 15.6 L17.4 6.4" fill="none" stroke="#2e4799" stroke-width="2.1"/></svg>
<div class="a" style="left:62px;top:475px;width:2305px;height:37px;background:transparent;border-bottom:1px solid #dfdfdf"></div>
<svg style="left:76px;top:485px" width="22" height="18" viewBox="0 0 22 18"><text x="0" y="9.9" font-size="10.5" font-weight="700" font-family="Liberation Sans" fill="#4f5d6b">1<tspan fill="#6f7d8a">23</tspan></text><circle cx="13.4" cy="12.5" r="5.7" fill="#388e3c"/><path d="M11.7 9.7 L16.2 12.5 L11.7 15.3 Z" fill="#fff"/></svg>
<svg style="left:108.5px;top:489.50px" width="11" height="7" viewBox="0 0 11 7"><path d="M0.3 0.5 L10.7 0.5 L5.5 5.6 Z" fill="#2e45a0"/></svg>
<div class="t" style="left:214px;top:486px;font-size:15px">ImportedMailsQueue</div>
<div class="t" style="left:522px;top:486px;font-size:15px">C0Clear_ImportedMailsQueue</div>
<div class="t" style="left:831px;top:486px;font-size:15px;transform:scaleX(0.835);transform-origin:0 0">TECH_USER</div>
<div class="t" style="left:1140px;top:486px;font-size:15px;transform:scaleX(0.835);transform-origin:0 0">TECH_USER</div>
<div class="t" style="left:1449px;top:486px;font-size:15px;transform:scaleX(0.95);transform-origin:0 0">03.11.2025 09:35</div>
<div class="t" style="left:1758px;top:486px;font-size:15px;transform:scaleX(0.88);transform-origin:0 0">C0</div>
<div class="a" style="left:2202px;top:483px;width:22px;height:22px;border:1px solid #b2b2b2;border-radius:3px;background:#fff"></div>
<svg style="left:2202px;top:483px" width="22" height="22" viewBox="0 0 22 22"><path d="M4.3 11.4 L8.5 15.6 L17.4 6.4" fill="none" stroke="#2e4799" stroke-width="2.1"/></svg>
<div class="a" style="left:62px;top:512px;width:2305px;height:37px;background:transparent;border-bottom:1px solid #dfdfdf"></div>
<svg style="left:76px;top:522px" width="22" height="18" viewBox="0 0 22 18"><text x="0" y="9.9" font-size="10.5" font-weight="700" font-family="Liberation Sans" fill="#4f5d6b">1<tspan fill="#6f7d8a">23</tspan></text><circle cx="13.4" cy="12.5" r="5.7" fill="#388e3c"/><path d="M11.7 9.7 L16.2 12.5 L11.7 15.3 Z" fill="#fff"/></svg>
<svg style="left:108.5px;top:526.50px" width="11" height="7" viewBox="0 0 11 7"><path d="M0.3 0.5 L10.7 0.5 L5.5 5.6 Z" fill="#2e45a0"/></svg>
<div class="t" style="left:214px;top:523px;font-size:15px">Kundenwert</div>
<div class="t" style="left:522px;top:523px;font-size:15px">Löschregel für Kundenwert</div>
<div class="t" style="left:831px;top:523px;font-size:15px;transform:scaleX(0.835);transform-origin:0 0">TECH_USER</div>
<div class="t" style="left:1140px;top:523px;font-size:15px;transform:scaleX(0.835);transform-origin:0 0">TECH_USER</div>
<div class="t" style="left:1449px;top:523px;font-size:15px;transform:scaleX(0.95);transform-origin:0 0">03.11.2025 09:35</div>
<div class="t" style="left:1758px;top:523px;font-size:15px;transform:scaleX(0.88);transform-origin:0 0">C0</div>
<div class="a" style="left:2202px;top:520px;width:22px;height:22px;border:1px solid #b2b2b2;border-radius:3px;background:#fff"></div>
<div class="a" style="left:62px;top:549px;width:2305px;height:37px;background:transparent;border-bottom:1px solid #dfdfdf"></div>
<svg style="left:76px;top:560px" width="22" height="18" viewBox="0 0 22 18"><text x="0" y="9.9" font-size="10.5" font-weight="700" font-family="Liberation Sans" fill="#4f5d6b">1<tspan fill="#6f7d8a">23</tspan></text><circle cx="13.4" cy="12.5" r="5.7" fill="#388e3c"/><path d="M11.7 9.7 L16.2 12.5 L11.7 15.3 Z" fill="#fff"/></svg>
<svg style="left:108.5px;top:564.50px" width="11" height="7" viewBox="0 0 11 7"><path d="M0.3 0.5 L10.7 0.5 L5.5 5.6 Z" fill="#2e45a0"/></svg>
<div class="t" style="left:214px;top:560px;font-size:15px">Schnittstellen-Details</div>
<div class="t" style="left:522px;top:560px;font-size:15px">Löschregel für Schnittstellen-Details</div>
<div class="t" style="left:831px;top:560px;font-size:15px;transform:scaleX(0.835);transform-origin:0 0">TECH_USER</div>
<div class="t" style="left:1140px;top:560px;font-size:15px;transform:scaleX(0.835);transform-origin:0 0">TECH_USER</div>
<div class="t" style="left:1449px;top:560px;font-size:15px;transform:scaleX(0.95);transform-origin:0 0">03.11.2025 09:35</div>
<div class="t" style="left:1758px;top:560px;font-size:15px;transform:scaleX(0.88);transform-origin:0 0">C0</div>
<div class="a" style="left:2202px;top:557px;width:22px;height:22px;border:1px solid #b2b2b2;border-radius:3px;background:#fff"></div>
<div class="a" style="left:62px;top:586px;width:2305px;height:38px;background:transparent;border-bottom:1px solid #dfdfdf"></div>
<svg style="left:76px;top:597px" width="22" height="18" viewBox="0 0 22 18"><text x="0" y="9.9" font-size="10.5" font-weight="700" font-family="Liberation Sans" fill="#4f5d6b">1<tspan fill="#6f7d8a">23</tspan></text><circle cx="13.4" cy="12.5" r="5.7" fill="#388e3c"/><path d="M11.7 9.7 L16.2 12.5 L11.7 15.3 Z" fill="#fff"/></svg>
<svg style="left:108.5px;top:601.50px" width="11" height="7" viewBox="0 0 11 7"><path d="M0.3 0.5 L10.7 0.5 L5.5 5.6 Z" fill="#2e45a0"/></svg>
<div class="t" style="left:214px;top:597px;font-size:15px">SearchResult</div>
<div class="t" style="left:522px;top:597px;font-size:15px">Löschregel für Suchergebnisse</div>
<div class="t" style="left:831px;top:597px;font-size:15px;transform:scaleX(0.835);transform-origin:0 0">TECH_USER</div>
<div class="t" style="left:1140px;top:597px;font-size:15px;transform:scaleX(0.835);transform-origin:0 0">TECH_USER</div>
<div class="t" style="left:1449px;top:597px;font-size:15px;transform:scaleX(0.95);transform-origin:0 0">03.11.2025 09:35</div>
<div class="t" style="left:1758px;top:597px;font-size:15px;transform:scaleX(0.88);transform-origin:0 0">C0</div>
<div class="a" style="left:2202px;top:594px;width:22px;height:22px;border:1px solid #b2b2b2;border-radius:3px;background:#fff"></div>
<svg style="left:2202px;top:594px" width="22" height="22" viewBox="0 0 22 22"><path d="M4.3 11.4 L8.5 15.6 L17.4 6.4" fill="none" stroke="#2e4799" stroke-width="2.1"/></svg>
<div class="a" style="left:62px;top:624px;width:2305px;height:37px;background:transparent;border-bottom:1px solid #dfdfdf"></div>
<svg style="left:76px;top:634px" width="22" height="18" viewBox="0 0 22 18"><text x="0" y="9.9" font-size="10.5" font-weight="700" font-family="Liberation Sans" fill="#4f5d6b">1<tspan fill="#6f7d8a">23</tspan></text><circle cx="13.4" cy="12.5" r="5.7" fill="#388e3c"/><path d="M11.7 9.7 L16.2 12.5 L11.7 15.3 Z" fill="#fff"/></svg>
<svg style="left:108.5px;top:638.50px" width="11" height="7" viewBox="0 0 11 7"><path d="M0.3 0.5 L10.7 0.5 L5.5 5.6 Z" fill="#2e45a0"/></svg>
<div class="t" style="left:214px;top:635px;font-size:15px">Vorgänge</div>
<div class="t" style="left:522px;top:635px;font-size:15px">Löschregel für Vorgänge des Compliance-...</div>
<div class="t" style="left:831px;top:635px;font-size:15px;transform:scaleX(0.835);transform-origin:0 0">TECH_USER</div>
<div class="t" style="left:1140px;top:635px;font-size:15px;transform:scaleX(0.835);transform-origin:0 0">TECH_USER</div>
<div class="t" style="left:1449px;top:635px;font-size:15px;transform:scaleX(0.95);transform-origin:0 0">03.11.2025 09:35</div>
<div class="t" style="left:1758px;top:635px;font-size:15px;transform:scaleX(0.88);transform-origin:0 0">C0</div>
<div class="a" style="left:2202px;top:632px;width:22px;height:22px;border:1px solid #b2b2b2;border-radius:3px;background:#fff"></div>
<div class="a" style="left:62px;top:661px;width:2305px;height:37px;background:transparent;border-bottom:1px solid #dfdfdf"></div>
<svg style="left:76px;top:671px" width="22" height="18" viewBox="0 0 22 18"><text x="0" y="9.9" font-size="10.5" font-weight="700" font-family="Liberation Sans" fill="#4f5d6b">1<tspan fill="#6f7d8a">23</tspan></text><circle cx="13.4" cy="12.5" r="5.7" fill="#388e3c"/><path d="M11.7 9.7 L16.2 12.5 L11.7 15.3 Z" fill="#fff"/></svg>
<svg style="left:108.5px;top:675.50px" width="11" height="7" viewBox="0 0 11 7"><path d="M0.3 0.5 L10.7 0.5 L5.5 5.6 Z" fill="#2e45a0"/></svg>
<div class="t" style="left:214px;top:672px;font-size:15px">Wartung</div>
<div class="t" style="left:522px;top:672px;font-size:15px">Löschregel für die Wartungen</div>
<div class="t" style="left:831px;top:672px;font-size:15px;transform:scaleX(0.835);transform-origin:0 0">TECH_USER</div>
<div class="t" style="left:1140px;top:672px;font-size:15px;transform:scaleX(0.835);transform-origin:0 0">TECH_USER</div>
<div class="t" style="left:1449px;top:672px;font-size:15px;transform:scaleX(0.95);transform-origin:0 0">03.11.2025 09:35</div>
<div class="t" style="left:1758px;top:672px;font-size:15px;transform:scaleX(0.88);transform-origin:0 0">C0</div>
<div class="a" style="left:2202px;top:669px;width:22px;height:22px;border:1px solid #b2b2b2;border-radius:3px;background:#fff"></div>
<div class="a" style="left:62px;top:698px;width:2305px;height:37px;background:transparent;border-bottom:1px solid #dfdfdf"></div>
<svg style="left:76px;top:709px" width="22" height="18" viewBox="0 0 22 18"><text x="0" y="9.9" font-size="10.5" font-weight="700" font-family="Liberation Sans" fill="#4f5d6b">1<tspan fill="#6f7d8a">23</tspan></text><circle cx="13.4" cy="12.5" r="5.7" fill="#388e3c"/><path d="M11.7 9.7 L16.2 12.5 L11.7 15.3 Z" fill="#fff"/></svg>
<svg style="left:108.5px;top:713.50px" width="11" height="7" viewBox="0 0 11 7"><path d="M0.3 0.5 L10.7 0.5 L5.5 5.6 Z" fill="#2e45a0"/></svg>
<div class="t" style="left:214px;top:709px;font-size:15px">Webservice-Logging</div>
<div class="t" style="left:522px;top:709px;font-size:15px">Löschregel für Webservice-Logging</div>
<div class="t" style="left:831px;top:709px;font-size:15px;transform:scaleX(0.835);transform-origin:0 0">TECH_USER</div>
<div class="t" style="left:1140px;top:709px;font-size:15px;transform:scaleX(0.835);transform-origin:0 0">TECH_USER</div>
<div class="t" style="left:1449px;top:709px;font-size:15px;transform:scaleX(0.95);transform-origin:0 0">03.11.2025 09:35</div>
<div class="t" style="left:1758px;top:709px;font-size:15px;transform:scaleX(0.88);transform-origin:0 0">C0</div>
<div class="a" style="left:2202px;top:706px;width:22px;height:22px;border:1px solid #b2b2b2;border-radius:3px;background:#fff"></div>
<div class="a" style="left:62px;top:735px;width:2305px;height:38px;background:transparent;border-bottom:1px solid #dfdfdf"></div>
<svg style="left:76px;top:746px" width="22" height="18" viewBox="0 0 22 18"><text x="0" y="9.9" font-size="10.5" font-weight="700" font-family="Liberation Sans" fill="#4f5d6b">1<tspan fill="#6f7d8a">23</tspan></text><circle cx="13.4" cy="12.5" r="5.7" fill="#388e3c"/><path d="M11.7 9.7 L16.2 12.5 L11.7 15.3 Z" fill="#fff"/></svg>
<svg style="left:108.5px;top:750.50px" width="11" height="7" viewBox="0 0 11 7"><path d="M0.3 0.5 L10.7 0.5 L5.5 5.6 Z" fill="#2e45a0"/></svg>
<div class="t" style="left:214px;top:746px;font-size:15px">Zeitereignisse</div>
<div class="t" style="left:522px;top:746px;font-size:15px">Löschregel für Zeitereignisse</div>
<div class="t" style="left:831px;top:746px;font-size:15px;transform:scaleX(0.835);transform-origin:0 0">TECH_USER</div>
<div class="t" style="left:1140px;top:746px;font-size:15px;transform:scaleX(0.835);transform-origin:0 0">TECH_USER</div>
<div class="t" style="left:1449px;top:746px;font-size:15px;transform:scaleX(0.95);transform-origin:0 0">03.11.2025 09:35</div>
<div class="t" style="left:1758px;top:746px;font-size:15px;transform:scaleX(0.88);transform-origin:0 0">C0</div>
<div class="a" style="left:2202px;top:743px;width:22px;height:22px;border:1px solid #b2b2b2;border-radius:3px;background:#fff"></div>
<div class="a" style="left:62px;top:773px;width:2305px;height:37px;background:transparent;border-bottom:1px solid #dfdfdf"></div>
<svg style="left:76px;top:783px" width="22" height="18" viewBox="0 0 22 18"><text x="0" y="9.9" font-size="10.5" font-weight="700" font-family="Liberation Sans" fill="#4f5d6b">1<tspan fill="#6f7d8a">23</tspan></text><circle cx="13.4" cy="12.5" r="5.7" fill="#388e3c"/><path d="M11.7 9.7 L16.2 12.5 L11.7 15.3 Z" fill="#fff"/></svg>
<svg style="left:108.5px;top:787.50px" width="11" height="7" viewBox="0 0 11 7"><path d="M0.3 0.5 L10.7 0.5 L5.5 5.6 Z" fill="#2e45a0"/></svg>
<div class="t" style="left:214px;top:784px;font-size:15px">Zwischenspeicher</div>
<div class="t" style="left:522px;top:784px;font-size:15px">Löschregel für Zwischenspeicher</div>
<div class="t" style="left:831px;top:784px;font-size:15px;transform:scaleX(0.835);transform-origin:0 0">TECH_USER</div>
<div class="t" style="left:1140px;top:784px;font-size:15px;transform:scaleX(0.835);transform-origin:0 0">TECH_USER</div>
<div class="t" style="left:1449px;top:784px;font-size:15px;transform:scaleX(0.95);transform-origin:0 0">03.11.2025 09:35</div>
<div class="t" style="left:1758px;top:784px;font-size:15px;transform:scaleX(0.88);transform-origin:0 0">C0</div>
<div class="a" style="left:2202px;top:781px;width:22px;height:22px;border:1px solid #b2b2b2;border-radius:3px;background:#fff"></div>
<div class="a" style="left:61px;top:1307px;width:2328px;height:1px;background:#dcdcdc"></div>
<div class="t" style="left:1189px;top:1316px;font-size:15px">12 Einträge</div>
<div class="a" style="left:70px;top:395px;width:198px;height:178px;background:#fcfcfc;border:1px solid #7d7d7d;box-shadow:3px 4px 10px rgba(0,0,0,.28)"></div>
<div class="t" style="left:107px;top:410.0px;font-size:15px;color:#12122e">Datenmenge ermitteln</div>
<div class="t" style="left:107px;top:443.0px;font-size:15px;color:#12122e">Suche öffnen</div>
<div class="t" style="left:107px;top:477.0px;font-size:15px;color:#12122e">Suche bearbeiten</div>
<div class="t" style="left:107px;top:510.0px;font-size:15px;color:#b9b9c4">Löschregel bearbeiten</div>
<div class="t" style="left:107px;top:544.0px;font-size:15px;color:#b9b9c4">Löschregel entfernen</div>
<svg style="left:82px;top:409.5px" width="22" height="18" viewBox="0 0 22 18"><text x="0" y="9.9" font-size="10.5" font-weight="700" font-family="Liberation Sans" fill="#4f5d6b">1<tspan fill="#6f7d8a">23</tspan></text><circle cx="13.4" cy="12.5" r="5.7" fill="#388e3c"/><path d="M11.7 9.7 L16.2 12.5 L11.7 15.3 Z" fill="#fff"/></svg>
<svg style="left:81px;top:440px" width="22" height="22" viewBox="0 0 22 22"><rect x="0.9" y="1.6" width="13.6" height="11.6" fill="#fff" stroke="#4a54b8" stroke-width="1.4"/><rect x="0.5" y="1" width="5.2" height="12.8" fill="#4a54b8"/><rect x="1.6" y="3.4" width="3" height="1" fill="#d6d9f2"/><rect x="1.6" y="5.9" width="3" height="1" fill="#d6d9f2"/><rect x="1.6" y="8.4" width="3" height="1" fill="#d6d9f2"/><rect x="1.6" y="10.9" width="3" height="1" fill="#d6d9f2"/><path d="M15.3 15.5 L19.3 19" stroke="#455a64" stroke-width="1.8" stroke-linecap="round"/><circle cx="12.9" cy="13" r="3.9" fill="#64b5f6" stroke="#455a64" stroke-width="1"/></svg>
<svg style="left:80px;top:473px" width="22" height="22" viewBox="0 0 22 22"><path d="M6 12 L1.5 16.5" stroke="#455a64" stroke-width="2.4" stroke-linecap="round"/><circle cx="10" cy="7.5" r="6" fill="#64b5f6" stroke="#455a64" stroke-width="1.2"/><path d="M19.3 11.7 L11.5 19.7" stroke="#f5a623" stroke-width="2.4"/><path d="M19 11.5 L20.2 10.3" stroke="#f48fb1" stroke-width="2.4"/><path d="M11.8 19.4 L10.2 21.2 L12.4 20.6 Z" fill="#444"/></svg>
<svg style="left:80px;top:506px" width="22" height="22" viewBox="0 0 22 22"><path d="M19 3 L3 19" stroke="#fbd9a0" stroke-width="3.6"/><path d="M17.5 1.5 L20.5 4.5" stroke="#f6c3c3" stroke-width="2"/><path d="M2.5 18.5 L1.5 21 L4 20 Z" fill="#f3dbb5"/></svg>
<svg style="left:82px;top:541px" width="18" height="21" viewBox="0 0 18 21"><rect x="0.5" y="1.5" width="15" height="2" rx="0.8" fill="#f7c6c6"/><rect x="5" y="0" width="6" height="2" rx="0.8" fill="#f7c6c6"/><path d="M1.5 4 L14.5 4 L13.5 19 Q13.4 20.5 12 20.5 L4 20.5 Q2.6 20.5 2.5 19 Z" fill="#f8c9c9"/><rect x="5" y="6" width="1.2" height="12" fill="#fde9e9"/><rect x="7.4" y="6" width="1.2" height="12" fill="#fde9e9"/><rect x="9.8" y="6" width="1.2" height="12" fill="#fde9e9"/></svg>
</body></html>
